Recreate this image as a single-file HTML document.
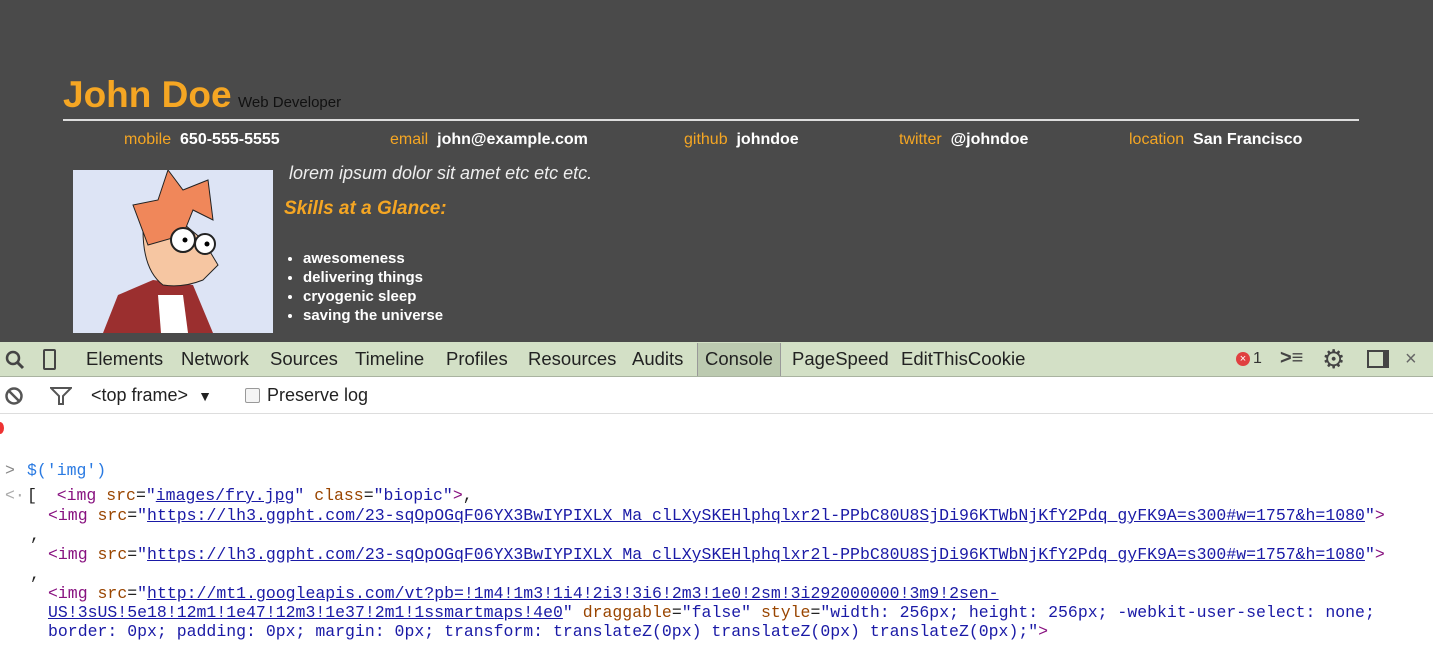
<!DOCTYPE html>
<html><head><style>
body{margin:0;width:1433px;height:654px;overflow:hidden;background:#fff;font-family:"Liberation Sans",sans-serif;position:relative}
.top{position:absolute;left:0;top:0;width:1433px;height:342px;background:#4a4a4a}
.abs{position:absolute;white-space:nowrap}
.or{color:#f5a623}
.tb{position:absolute;left:0;top:342px;width:1433px;height:34px;background:#d3e0c6;border-bottom:1px solid #a9b3a0}
.tab{position:absolute;top:348px;font-size:18.5px;color:#222}
.cb{position:absolute;left:0;top:377px;width:1433px;height:36px;border-bottom:1px solid #ddd;background:#fff}
.m{font-family:"Liberation Mono",monospace;font-size:16.5px;position:absolute;white-space:nowrap;color:#222}
.tag{color:#881280}.at{color:#994500}.v{color:#1a1aa6}.u{color:#1a1aa6;text-decoration:underline}
</style></head><body>
<div class="top"></div>
<div class="abs or" style="left:63px;top:74px;font-size:37px;font-weight:bold">John Doe</div>
<div class="abs" style="left:238px;top:94px;font-size:15px;color:#111">Web Developer</div>
<div class="abs" style="left:63px;top:119px;width:1296px;height:2px;background:#ddd"></div>
<div class="abs" style="top:131px;left:124px;font-size:16px"><span class="or">mobile</span>&nbsp; <b style="color:#fff">650-555-5555</b></div>
<div class="abs" style="top:131px;left:390px;font-size:16px"><span class="or">email</span>&nbsp; <b style="color:#fff">john@example.com</b></div>
<div class="abs" style="top:131px;left:684px;font-size:16px"><span class="or">github</span>&nbsp; <b style="color:#fff">johndoe</b></div>
<div class="abs" style="top:131px;left:899px;font-size:16px"><span class="or">twitter</span>&nbsp; <b style="color:#fff">@johndoe</b></div>
<div class="abs" style="top:131px;left:1129px;font-size:16px"><span class="or">location</span>&nbsp; <b style="color:#fff">San Francisco</b></div>
<svg class="abs" style="left:73px;top:170px" width="200" height="163" viewBox="0 0 200 163">
<rect width="200" height="163" fill="#dde4f5"/>
<path d="M30 163 L45 125 L80 110 L120 115 L140 163Z" fill="#9b2f2f"/>
<path d="M85 125 L110 125 L115 163 L88 163Z" fill="#fff"/>
<path d="M70 60 Q75 40 100 45 L130 70 L145 95 L130 110 Q110 118 90 115 Q70 100 70 60Z" fill="#f6c6a2" stroke="#222"/>
<path d="M60 35 L85 30 L95 0 L110 20 L135 10 L140 50 L120 40 L110 65 L75 75Z" fill="#f0875a" stroke="#222"/>
<circle cx="110" cy="70" r="12" fill="#fff" stroke="#222" stroke-width="2"/><circle cx="132" cy="74" r="10" fill="#fff" stroke="#222" stroke-width="2"/>
<circle cx="112" cy="70" r="2.5" fill="#000"/><circle cx="134" cy="74" r="2.5" fill="#000"/>
</svg>
<div class="abs" style="left:289px;top:163px;font-size:18px;font-style:italic;color:#eee">lorem ipsum dolor sit amet etc etc etc.</div>
<div class="abs or" style="left:284px;top:198px;font-size:19px;font-style:italic;font-weight:bold">Skills at a Glance:</div>
<ul class="abs" style="left:263px;top:249px;margin:0;padding-left:40px;color:#fff;font-weight:bold;font-size:15px;line-height:19px;list-style:disc">
<li>awesomeness</li><li>delivering things</li><li>cryogenic sleep</li><li>saving the universe</li></ul>
<div class="tb"></div>
<svg class="abs" style="left:5px;top:350px" width="20" height="20"><circle cx="8" cy="8" r="6" fill="none" stroke="#444" stroke-width="2.5"/><path d="M12 12 L18 18" stroke="#444" stroke-width="3"/></svg>
<svg class="abs" style="left:42px;top:348px" width="16" height="24"><rect x="2" y="2" width="11" height="19" rx="1" fill="none" stroke="#444" stroke-width="2"/></svg>
<div class="tab" style="left:86px">Elements</div><div class="tab" style="left:181px">Network</div><div class="tab" style="left:270px">Sources</div><div class="tab" style="left:355px">Timeline</div><div class="tab" style="left:446px">Profiles</div><div class="tab" style="left:528px">Resources</div><div class="tab" style="left:632px">Audits</div>
<div class="abs" style="left:697px;top:343px;width:82px;height:33px;background:#bccab0;border-left:1px solid #999;border-right:1px solid #999"></div>
<div class="tab" style="left:705px">Console</div><div class="tab" style="left:792px">PageSpeed</div><div class="tab" style="left:901px">EditThisCookie</div>
<div class="abs" style="left:1236px;top:352px;width:14px;height:14px;border-radius:50%;background:#e04040;color:#fff;font-size:11px;text-align:center;line-height:14px">×</div>
<div class="abs" style="left:1253px;top:350px;font-size:16px;color:#333">1</div>
<div class="abs" style="left:1280px;top:347px;font-size:20px;font-weight:bold;color:#444">&gt;≡</div>
<div class="abs" style="left:1322px;top:344px;font-size:26px;color:#444">⚙</div>
<div class="abs" style="left:1367px;top:350px;width:14px;height:14px;border:2px solid #444;border-right-width:6px"></div>
<div class="abs" style="left:1405px;top:348px;font-size:20px;color:#666">×</div>
<div class="cb"></div>
<svg class="abs" style="left:4px;top:386px" width="20" height="20"><circle cx="10" cy="10" r="7.5" fill="none" stroke="#555" stroke-width="2.5"/><path d="M5 5 L15 15" stroke="#555" stroke-width="2.5"/></svg>
<svg class="abs" style="left:50px;top:387px" width="22" height="18"><path d="M1 1 H21 L13 9 V17 H9 V9Z" fill="none" stroke="#555" stroke-width="2"/></svg>
<div class="abs" style="left:91px;top:385px;font-size:18px;color:#222">&lt;top frame&gt; &nbsp;<span style="font-size:14px">▼</span></div>
<div class="abs" style="left:245px;top:388px;width:13px;height:13px;border:1px solid #999;border-radius:2px;background:#f4f4f4"></div>
<div class="abs" style="left:267px;top:385px;font-size:18px;color:#222">Preserve log</div>
<div class="abs" style="left:-4px;top:422px;width:8px;height:12px;border-radius:50%;background:#e33"></div>
<div class="m" style="left:5px;top:461px;color:#888">&gt;</div>
<div class="m" style="left:27px;top:461px;color:#2a7ae2">$('img')</div>
<div class="m" style="left:5px;top:486px;color:#aaa">&lt;·</div>
<div class="m" style="left:27px;top:486px">[ &nbsp;<span class="tag">&lt;img</span> <span class="at">src</span>=<span class="v">"</span><span class="u">images/fry.jpg</span><span class="v">"</span> <span class="at">class</span>=<span class="v">"biopic"</span><span class="tag">&gt;</span>,</div>
<div class="m" style="left:48px;top:506px"><span class="tag">&lt;img</span> <span class="at">src</span>=<span class="v">"</span><span class="u">https://lh3.ggpht.com/23-sqOpOGqF06YX3BwIYPIXLX_Ma_clLXySKEHlphqlxr2l-PPbC80U8SjDi96KTWbNjKfY2Pdq_gyFK9A=s300#w=1757&amp;h=1080</span><span class="v">"</span><span class="tag">&gt;</span></div>
<div class="m" style="left:30px;top:526px">,</div>
<div class="m" style="left:48px;top:545px"><span class="tag">&lt;img</span> <span class="at">src</span>=<span class="v">"</span><span class="u">https://lh3.ggpht.com/23-sqOpOGqF06YX3BwIYPIXLX_Ma_clLXySKEHlphqlxr2l-PPbC80U8SjDi96KTWbNjKfY2Pdq_gyFK9A=s300#w=1757&amp;h=1080</span><span class="v">"</span><span class="tag">&gt;</span></div>
<div class="m" style="left:30px;top:565px">,</div>
<div class="m" style="left:48px;top:584px"><span class="tag">&lt;img</span> <span class="at">src</span>=<span class="v">"</span><span class="u">http://mt1.googleapis.com/vt?pb=!1m4!1m3!1i4!2i3!3i6!2m3!1e0!2sm!3i292000000!3m9!2sen-</span></div>
<div class="m" style="left:48px;top:603px"><span class="u">US!3sUS!5e18!12m1!1e47!12m3!1e37!2m1!1ssmartmaps!4e0</span><span class="v">"</span> <span class="at">draggable</span>=<span class="v">"false"</span> <span class="at">style</span>=<span class="v">"width: 256px; height: 256px; -webkit-user-select: none;</span></div>
<div class="m" style="left:48px;top:622px"><span class="v">border: 0px; padding: 0px; margin: 0px; transform: translateZ(0px) translateZ(0px) translateZ(0px);"</span><span class="tag">&gt;</span></div>
</body></html>
